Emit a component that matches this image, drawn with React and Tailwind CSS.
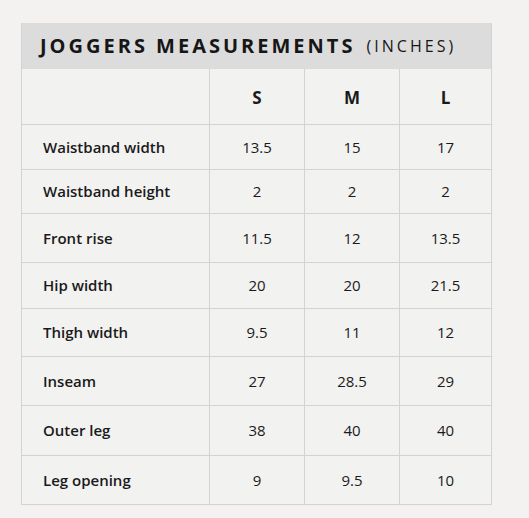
export default function App() {
  const rows = [
    ["Waistband width", "13.5", "15", "17", "h-[45px]"],
    ["Waistband height", "2", "2", "2", "h-[44px]"],
    ["Front rise", "11.5", "12", "13.5", "h-[49px]"],
    ["Hip width", "20", "20", "21.5", "h-[46px]"],
    ["Thigh width", "9.5", "11", "12", "h-[48px]"],
    ["Inseam", "27", "28.5", "29", "h-[49px]"],
    ["Outer leg", "38", "40", "40", "h-[50px]"],
    ["Leg opening", "9", "9.5", "10", "h-[48px]"],
  ];
  return (
    <div className="w-[529px] h-[518px] bg-[#f3f2f0] pt-[23px] pl-[21px]" style={{ fontFamily: '"Open Sans", "Noto Sans", sans-serif' }}>
      <div className="w-[471px] border-x border-b border-[#d3d3d3] bg-[#f2f2f1]">
        <div className="h-[46px] bg-[#dcdcdc] flex items-center pl-[18px] text-[#161616] whitespace-nowrap">
          <span className="text-[20px] font-bold tracking-[0.15em]">JOGGERS MEASUREMENTS</span>
          <span className="ml-[11px] text-[16px] font-medium tracking-[0.19em]">(INCHES)</span>
        </div>
        <div className="grid grid-cols-[188px_95px_95px_91px] h-[56px] border-b border-[#d3d3d3] text-[17px] font-bold text-[#1a1a1a]">
          <div className="border-r border-[#d3d3d3]"></div>
          <div className="border-r border-[#d3d3d3] flex items-center justify-center pt-[3px]">S</div>
          <div className="border-r border-[#d3d3d3] flex items-center justify-center pt-[3px]">M</div>
          <div className="flex items-center justify-center pt-[3px]">L</div>
        </div>
        {rows.map((r, i) => (
          <div key={i} className={`grid grid-cols-[188px_95px_95px_91px] ${r[4]} ${i < rows.length - 1 ? "border-b" : ""} border-[#d3d3d3] text-[#1a1a1a]`}>
            <div className="border-r border-[#d3d3d3] flex items-center pl-[21px] text-[15px] font-semibold">{r[0]}</div>
            <div className="border-r border-[#d3d3d3] flex items-center justify-center text-[15px]">{r[1]}</div>
            <div className="border-r border-[#d3d3d3] flex items-center justify-center text-[15px]">{r[2]}</div>
            <div className="flex items-center justify-center text-[15px]">{r[3]}</div>
          </div>
        ))}
      </div>
    </div>
  );
}
